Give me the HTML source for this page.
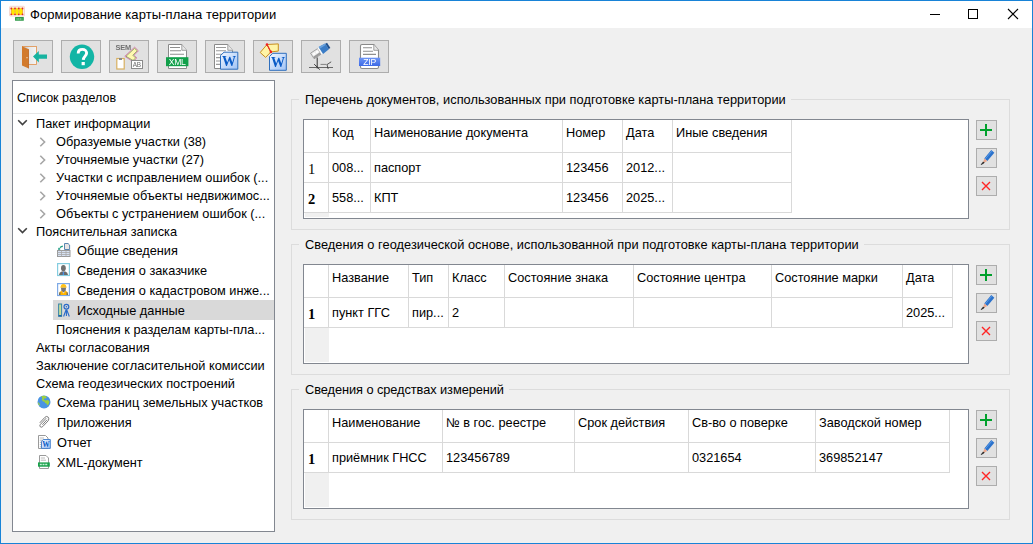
<!DOCTYPE html>
<html><head><meta charset="utf-8">
<style>
*{margin:0;padding:0;box-sizing:border-box}
html,body{width:1033px;height:544px;overflow:hidden;background:#f0f0f0}
body{position:relative;font-family:"Liberation Sans",sans-serif;font-size:12.5px;color:#000}
.a{position:absolute}
.t{position:absolute;white-space:nowrap;line-height:1}
#win{position:absolute;left:0;top:0;width:1033px;height:544px;border:1px solid #1883d7;background:#f0f0f0}
#title{position:absolute;left:1px;top:1px;width:1031px;height:27px;background:#fff}
.tb{position:absolute;top:40px;width:40px;height:33px;border:1px solid #adadad;background:#e1e1e1}
.sb{position:absolute;left:976px;width:21px;height:20px;border:1px solid #adadad;background:#e1e1e1}
.gb{position:absolute;left:291px;width:719px;height:131px;border:1px solid #dcdcdc}
.gcap{position:absolute;background:#f0f0f0;padding:0 5px 0 6px;white-space:nowrap;line-height:1}
.tbl{position:absolute;left:303px;width:666px;height:100px;border:1px solid #828790;background:#fff}
.hl{position:absolute;height:1px;background:#d9d9d9}
.vl{position:absolute;width:1px;background:#d9d9d9}
</style></head><body>
<div id="win"></div>
<div id="title"></div>

<!-- title icon -->
<svg class="a" style="left:8px;top:4px" width="18" height="18" viewBox="8 4 18 18">
  <rect x="9.5" y="6.3" width="15" height="9.8" rx="1" fill="#fbece6" stroke="#f2d2c8" stroke-width="0.8"/>
  <ellipse cx="13.1" cy="11.4" rx="1.9" ry="3" fill="#ffe800"/>
  <ellipse cx="16.9" cy="11.4" rx="1.9" ry="3" fill="#ffe800"/>
  <ellipse cx="20.7" cy="11.4" rx="1.9" ry="3" fill="#ffe800"/>
  <rect x="11.5" y="8.3" width="11" height="6.2" fill="none" stroke="#ffd000" stroke-width="0.8"/>
  <path d="M11.3 8.5V14.3M15 8.5V14.3M18.8 8.5V14.3M22.5 8.5V14.3" stroke="#e8a040" stroke-width="0.6"/>
  <g fill="#e02828"><circle cx="11.3" cy="8.5" r="0.9"/><circle cx="15" cy="8.5" r="0.9"/><circle cx="18.8" cy="8.5" r="0.9"/><circle cx="22.5" cy="8.5" r="0.9"/>
  <circle cx="11.3" cy="14.3" r="0.9"/><circle cx="15" cy="14.3" r="0.9"/><circle cx="18.8" cy="14.3" r="0.9"/><circle cx="22.5" cy="14.3" r="0.9"/></g>
  <rect x="15" y="17" width="8.8" height="3.8" rx="0.5" fill="#2f9a4a"/>
  <path d="M16.5 19H22.3" stroke="#bfe6c8" stroke-width="1" stroke-dasharray="1.2 0.5"/>
</svg>
<div class="t" style="left:30px;top:8px;font-size:13px;letter-spacing:0.08px">Формирование карты-плана территории</div>

<!-- window controls -->
<div class="a" style="left:930px;top:14px;width:10px;height:1px;background:#000"></div>
<div class="a" style="left:968px;top:9px;width:10px;height:10px;border:1px solid #000"></div>
<svg class="a" style="left:1007px;top:8px" width="12" height="12" viewBox="0 0 12 12"><path d="M1 1L11 11M11 1L1 11" stroke="#000" stroke-width="1.1"/></svg>

<!-- toolbar -->
<div class="tb" style="left:13px"></div>
<div class="tb" style="left:61px"></div>
<div class="tb" style="left:109px"></div>
<div class="tb" style="left:157px"></div>
<div class="tb" style="left:205px"></div>
<div class="tb" style="left:253px"></div>
<div class="tb" style="left:301px"></div>
<div class="tb" style="left:349px"></div>

<!-- toolbar icons -->
<svg class="a" style="left:0;top:0;will-change:transform" width="400" height="80" viewBox="0 0 400 80">
 <defs>
  <linearGradient id="dg" x1="0" x2="1"><stop offset="0" stop-color="#b8b8b8"/><stop offset="0.5" stop-color="#e8e8e8"/><stop offset="1" stop-color="#f4f4f4"/></linearGradient>
  <linearGradient id="wg" x1="0" y1="0" x2="1" y2="1"><stop offset="0" stop-color="#f2f7ff"/><stop offset="1" stop-color="#9fc2f5"/></linearGradient>
  <linearGradient id="zg" x1="0" y1="0" x2="0" y2="1"><stop offset="0" stop-color="#6d95f5"/><stop offset="1" stop-color="#3d6ae6"/></linearGradient>
  <linearGradient id="ug" x1="0" y1="0" x2="1" y2="0"><stop offset="0" stop-color="#3f7fc8"/><stop offset="1" stop-color="#2a66b0"/></linearGradient>
 </defs>
 <!-- exit door -->
 <rect x="22.5" y="46.5" width="14" height="18" fill="url(#dg)" stroke="#e0904a" stroke-width="0.8"/>
 <path d="M22 46.3 L28.8 49.3 L28.8 68.5 L22 65.5 Z" fill="#d27a2c"/><path d="M28.2 49.2 L28.8 49.5 L28.8 68.5 L28.2 68.2 Z" fill="#b86020"/>
 <rect x="26.5" y="57" width="1" height="1.3" fill="#f4e0c8"/>
 <path d="M33 56.6 L38.8 51 L38.8 54.4 L47 54.4 L47 58.8 L38.8 58.8 L38.8 62.6 Z" fill="#17b3a0"/>
 <!-- help -->
 <circle cx="82" cy="56.8" r="12.2" fill="#12b5a5"/>
 <path d="M78.2 53.4 C78.2 50.6 80 49.4 82.4 49.4 C84.9 49.4 86.6 51 86.6 53.1 C86.6 55.9 83.5 56.4 83.3 59.8" fill="none" stroke="#fff" stroke-width="2.9"/>
 <rect x="81.6" y="62" width="3.2" height="3.2" fill="#fff"/>
 <!-- SEM -->
 <text x="115.6" y="49.8" font-family="Liberation Sans" font-weight="bold" font-size="7.4" fill="#707070" letter-spacing="-0.2">SEM</text>
 <path d="M134.6 47.2 L138.4 50.8 L134 55.2 L136.8 58 L133 61.6 L124.8 56.3 Z" fill="#fff8b0" stroke="#d070b0" stroke-width="0.9"/>
 <path d="M134.6 48.4 L137.2 50.8 L132.8 55.2 L135.6 58 L133 60.4 L126 56.3 Z" fill="none" stroke="#3a6a3a" stroke-width="0.5"/>
 <rect x="116.8" y="58.5" width="7.4" height="10.5" fill="#fff" stroke="#d8b060" stroke-width="1.2"/>
 <rect x="119" y="58" width="3" height="2" fill="#8a8a8a"/>
 <rect x="131.5" y="60.5" width="11" height="8" fill="#fff" stroke="#8a8a8a" stroke-width="1"/>
 <text x="132.8" y="67.2" font-family="Liberation Sans" font-size="6.4" fill="#6a6a6a" letter-spacing="-0.3">AB</text>
 <!-- XML -->
 <path d="M168.5 44.5 L181.8 44.5 L186.5 50.3 L186.5 68.5 L168.5 68.5 Z" fill="#fff" stroke="#8a8a8a" stroke-width="1"/>
 <path d="M181.8 44.5 L181.8 50.3 L186.5 50.3" fill="#e8e8e8" stroke="#8a8a8a" stroke-width="0.8"/>
 <g stroke="#8f8f8f" stroke-width="1.1"><path d="M170 47.5H180M170 50.8H181M170 54.2H184"/></g>
 <rect x="166" y="57.2" width="22.4" height="9" fill="#11a04a"/>
 <text x="177.2" y="65.2" text-anchor="middle" font-family="Liberation Sans" font-size="8.6" fill="#fff" letter-spacing="-0.3">XML</text>
 <!-- Word doc -->
 <path d="M214.5 44.5 L227.8 44.5 L232.5 50.3 L232.5 68.5 L214.5 68.5 Z" fill="#fff" stroke="#8a8a8a" stroke-width="1"/>
 <path d="M227.8 44.5 L227.8 50.3 L232.5 50.3" fill="#e8e8e8" stroke="#8a8a8a" stroke-width="0.8"/>
 <g stroke="#9a9a9a" stroke-width="1.1"><path d="M216 47.5H226M216 50.8H226M216 54.2H224M216 57.6H222M216 61H222M216 64.4H222"/></g>
 <path d="M220.5 55.5 L224 52.2 L237.8 52.2 L237.8 69.2 L220.5 69.2 Z" fill="url(#wg)" stroke="#2f6fbd" stroke-width="1"/>
 <text x="229" y="66.2" text-anchor="middle" font-family="Liberation Serif" font-weight="bold" font-size="14" fill="#0b5cc7" transform-origin="0 0">W</text>
 <!-- polygon + Word -->
 <path d="M260.2 52.5 L267 44.5 L270.9 51.9 L265.6 57.4 Z" fill="#fff4a6" stroke="#c98f1c" stroke-width="1"/>
 <path d="M267 44.5 L278.3 43.9 L278.3 51.1 L270.9 51.9 Z" fill="#fff4a6" stroke="#c98f1c" stroke-width="1"/>
 <path d="M267 44.5 L270.9 51.9" stroke="#ee2020" stroke-width="1.1"/>
 <circle cx="267" cy="44.6" r="1.3" fill="#ee2020"/><circle cx="270.9" cy="51.9" r="1.3" fill="#ee2020"/>
 <path d="M269.5 56.5 L272.8 53.3 L286.3 53.3 L286.3 70.3 L269.5 70.3 Z" fill="url(#wg)" stroke="#2f6fbd" stroke-width="1"/>
 <text x="278" y="67.3" text-anchor="middle" font-family="Liberation Serif" font-weight="bold" font-size="14" fill="#0b5cc7" transform-origin="0 0">W</text>
 <!-- USB / geodesy -->
 <g transform="rotate(-33 321 50)">
  <rect x="310.5" y="47" width="8.5" height="6.6" fill="#ececec" stroke="#7a7a7a" stroke-width="0.6"/>
  <rect x="310.8" y="51.4" width="8" height="2" fill="#9a9a9a"/>
  <rect x="312" y="48.6" width="2.4" height="1.8" fill="#fff"/><rect x="315.4" y="48.6" width="2.4" height="1.8" fill="#fff"/>
  <rect x="319" y="46.6" width="1.6" height="7.4" fill="#fafafa"/>
  <path d="M320.6 46.2 L328 46.8 L328 53.8 L320.6 54.4 Z" fill="#3a7cc6"/>
  <path d="M320.6 46.2 L328 46.8 L328 48.4 L320.6 48.2 Z" fill="#6aa2dc"/>
  <rect x="328" y="47.2" width="2" height="6.2" fill="#1f4f8c"/>
 </g>
 <path d="M317.2 57.5 V68.5" stroke="#333" stroke-width="1"/>
 <path d="M309 67.5 H333" stroke="#5a5a5a" stroke-width="0.9"/>
 <path d="M314.2 64.2 L319.8 69.6" stroke="#2a2a2a" stroke-width="0.9"/>
 <path d="M320.5 64.4 H326.5" stroke="#777" stroke-width="0.9"/>
 <path d="M327 64.6 L331.2 61.8 M327 64.6 L328.2 69" stroke="#333" stroke-width="0.8"/>
 <!-- ZIP -->
 <path d="M362 44.5 L373.8 44.5 L378.5 50.3 L378.5 67 Q378.5 68.5 377 68.5 L362 68.5 Q360.5 68.5 360.5 67 L360.5 46 Q360.5 44.5 362 44.5 Z" fill="#fff" stroke="#8a8a8a" stroke-width="1.1"/>
 <path d="M373.8 44.5 L373.8 50.3 L378.5 50.3" fill="#e8e8e8" stroke="#8a8a8a" stroke-width="0.8"/>
 <g stroke="#8f8f8f" stroke-width="1.1"><path d="M363 47.8H372M363 51.3H373M363 54.4H376"/></g>
 <rect x="359" y="57.7" width="21.2" height="8.3" fill="url(#zg)"/>
 <text x="369.6" y="65.1" text-anchor="middle" font-family="Liberation Sans" font-size="8.6" fill="#fff" letter-spacing="-0.2">ZIP</text>
</svg>

<!-- left panel -->
<div class="a" style="left:12px;top:80px;width:263px;height:452px;border:1px solid #828790;background:#fff"></div>
<div class="a" style="left:13px;top:113px;width:261px;height:1px;background:#e5e5e5"></div>
<div class="t" style="left:17px;top:92px">Список разделов</div>

<div class="a" style="left:53px;top:300px;width:221px;height:20px;background:#d9d9d9"></div>
<!-- tree icons -->
<svg class="a" style="left:30px;top:236px" width="50" height="240" viewBox="30 236 50 240">
 <defs><linearGradient id="wg2" x1="0" y1="0" x2="1" y2="1"><stop offset="0" stop-color="#f2f7ff"/><stop offset="1" stop-color="#9fc2f5"/></linearGradient></defs>
 <!-- общие сведения -->
 <rect x="57.5" y="250.5" width="12.5" height="6" fill="#d6e2f4" stroke="#9a9a9a" stroke-width="1"/>
 <path d="M57.5 252.5H70M57.5 254.5H70M61.5 250.5V256.5M66 250.5V256.5" stroke="#a8a8a8" stroke-width="0.8"/>
 <path d="M64.5 243.5 H68 L69.6 245 V249.5 H64.5 Z" fill="#e8e4e4" stroke="#5a86b0" stroke-width="1"/>
 <path d="M62.8 245.6 Q60 245.8 59.2 248.4 L58.2 247.6 L58.3 250 L60.6 249.6 L59.8 249 Q60.5 247.2 62.8 247 Z" fill="#1a9a80"/>
 <!-- заказчик -->
 <rect x="57.6" y="263.6" width="11.8" height="11.9" fill="#fff" stroke="#84cde0" stroke-width="1.2"/>
 <ellipse cx="63.4" cy="268.2" rx="2.4" ry="3.1" fill="#707070"/>
 <path d="M59 275 Q59.2 272.3 61.6 271.6 L65.4 271.6 Q67.8 272.3 68 275 Z" fill="#6a6a6a"/>
 <path d="M62.8 271.8 H64 L64.1 275 H62.7 Z" fill="#4a90e8"/>
 <!-- инженер -->
 <rect x="57.6" y="283.6" width="11.8" height="11.9" fill="#fff" stroke="#7eaae6" stroke-width="1.2"/>
 <path d="M60.4 287.8 Q60.6 284 63.5 283.9 Q66.4 284 66.6 287.8 Z" fill="#ffc21a"/>
 <path d="M61 287.8 H66 L65.6 291 L63.5 292.5 L61.4 291 Z" fill="#777"/>
 <path d="M59 295 L59.5 292 L61.5 290.8 L63.5 293.6 L65.5 290.8 L67.5 292 L68 295 Z" fill="#ffb400"/>
 <path d="M59 295 L59.4 292.5 L60.4 292 L60.4 295 Z M68 295 L67.6 292.5 L66.6 292 L66.6 295 Z" fill="#666"/>
 <!-- исходные данные -->
 <rect x="58.6" y="304" width="3" height="12.4" fill="#c8dc98" stroke="#3a86a8" stroke-width="1"/>
 <path d="M58.6 315.6 H61.6" stroke="#1f5fb0" stroke-width="1.2"/>
 <circle cx="66.4" cy="306.8" r="2.4" fill="none" stroke="#2a6ac8" stroke-width="1.2"/>
 <circle cx="66.4" cy="306.8" r="0.8" fill="#2a6ac8"/>
 <path d="M66.4 309.5 V316 M66 310 L63.6 316.5 M66.8 310 L69.3 316.5" stroke="#2a6ac8" stroke-width="1.1"/>
 <!-- globe -->
 <circle cx="44" cy="401.9" r="6.5" fill="#4a94e4"/>
 <path d="M41.2 396.3 Q43 395.6 45.5 396 L46.8 397.4 L45.8 398.6 L44.5 398.2 L43.6 399.6 L45.6 400.5 L48 400 L49.5 401.5 L48.8 404 L47.2 405.5 L46.5 403.5 L45 403 L44.5 401.6 L43 401.4 L41.8 399.8 L42.3 398.2 Z" fill="#9ed040"/>
 <path d="M37.8 402.5 Q38.3 404.8 39.6 405.8 L40 404.6 L38.7 402.6 Z" fill="#9ed040"/>
 <!-- paperclip -->
 <path d="M46.2 418.2 L40.4 424.4 Q39.2 425.9 40.4 426.9 Q41.6 427.7 42.8 426.5 L48.2 420.8 Q49.6 418.8 48.1 417 Q46.4 415.7 44.8 417.4 L39.8 422.8" fill="none" stroke="#6e6e6e" stroke-width="0.9"/>
 <path d="M42.4 424.8 L47 419.8" fill="none" stroke="#6e6e6e" stroke-width="0.9"/>
 <!-- word doc -->
 <path d="M38.5 435.5 H45.5 L48 438 V448.5 H38.5 Z" fill="#fff" stroke="#9a9a9a" stroke-width="1"/>
 <path d="M39.8 438H44M39.8 440.2H45M39.8 442.4H41.5M39.8 444.6H41.5M39.8 446.8H41.5" stroke="#aaa" stroke-width="0.8"/>
 <path d="M41.5 441.3 L43.3 439.5 H50.3 V448.4 H41.5 Z" fill="url(#wg2)" stroke="#3a78c8" stroke-width="0.9"/>
 <text x="46" y="447.2" text-anchor="middle" font-family="Liberation Serif" font-weight="bold" font-size="7.5" fill="#0b5cc7">W</text>
 <!-- xml doc -->
 <path d="M39.5 455.5 H46 L48.5 458 V468.5 H39.5 Z" fill="#fff" stroke="#9a9a9a" stroke-width="1"/>
 <path d="M40.8 458H45M40.8 460.2H46" stroke="#aaa" stroke-width="0.8"/>
 <rect x="38" y="462.4" width="11.8" height="4.3" fill="#18a04a"/>
 <path d="M39.8 464.5H48" stroke="#c8f0d8" stroke-width="1.4" stroke-dasharray="2 0.7"/>
</svg>

<!-- group boxes -->
<div class="gb" style="top:99px"></div>
<div class="gb" style="top:244px"></div>
<div class="gb" style="top:389px"></div>

<div class="tbl" style="top:119px"></div>
<div class="tbl" style="top:264px"></div>
<div class="tbl" style="top:409px"></div>

<div class="sb" style="top:120px"></div>
<div class="sb" style="top:148px"></div>
<div class="sb" style="top:176px"></div>
<div class="sb" style="top:265px"></div>
<div class="sb" style="top:293px"></div>
<div class="sb" style="top:321px"></div>
<div class="sb" style="top:410px"></div>
<div class="sb" style="top:438px"></div>
<div class="sb" style="top:466px"></div>

<!-- tree -->
<div class="t" style="left:36px;top:118px;font-size:12.75px">Пакет информации</div>
<svg class="a" style="left:17px;top:119px" width="11" height="7" viewBox="0 0 11 7"><path d="M1.2 1.2L5.5 5.5L9.8 1.2" fill="none" stroke="#404040" stroke-width="1.6"/></svg>
<div class="t" style="left:56px;top:136px;font-size:12.75px">Образуемые участки (38)</div>
<svg class="a" style="left:39px;top:137px" width="8" height="11" viewBox="0 0 8 11"><path d="M1.3 0.8L5.6 5L1.3 9.2" fill="none" stroke="#a6a6a6" stroke-width="1.6"/></svg>
<div class="t" style="left:56px;top:154px;font-size:12.75px">Уточняемые участки (27)</div>
<svg class="a" style="left:39px;top:155px" width="8" height="11" viewBox="0 0 8 11"><path d="M1.3 0.8L5.6 5L1.3 9.2" fill="none" stroke="#a6a6a6" stroke-width="1.6"/></svg>
<div class="t" style="left:56px;top:172px;font-size:12.75px">Участки с исправлением ошибок (...</div>
<svg class="a" style="left:39px;top:173px" width="8" height="11" viewBox="0 0 8 11"><path d="M1.3 0.8L5.6 5L1.3 9.2" fill="none" stroke="#a6a6a6" stroke-width="1.6"/></svg>
<div class="t" style="left:56px;top:190px;font-size:12.75px">Уточняемые объекты недвижимос...</div>
<svg class="a" style="left:39px;top:191px" width="8" height="11" viewBox="0 0 8 11"><path d="M1.3 0.8L5.6 5L1.3 9.2" fill="none" stroke="#a6a6a6" stroke-width="1.6"/></svg>
<div class="t" style="left:56px;top:208px;font-size:12.75px">Объекты с устранением ошибок (...</div>
<svg class="a" style="left:39px;top:209px" width="8" height="11" viewBox="0 0 8 11"><path d="M1.3 0.8L5.6 5L1.3 9.2" fill="none" stroke="#a6a6a6" stroke-width="1.6"/></svg>
<div class="t" style="left:36px;top:226px;font-size:12.75px">Пояснительная записка</div>
<svg class="a" style="left:17px;top:227px" width="11" height="7" viewBox="0 0 11 7"><path d="M1.2 1.2L5.5 5.5L9.8 1.2" fill="none" stroke="#404040" stroke-width="1.6"/></svg>
<div class="t" style="left:77px;top:245px;font-size:12.75px">Общие сведения</div>
<div class="t" style="left:77px;top:265px;font-size:12.75px">Сведения о заказчике</div>
<div class="t" style="left:77px;top:285px;font-size:12.75px">Сведения о кадастровом инже...</div>
<div class="t" style="left:77px;top:305px;font-size:12.75px">Исходные данные</div>
<div class="t" style="left:56px;top:324px;font-size:12.75px">Пояснения к разделам карты-пла...</div>
<div class="t" style="left:36px;top:342px;font-size:12.75px">Акты согласования</div>
<div class="t" style="left:36px;top:360px;font-size:12.75px">Заключение согласительной комиссии</div>
<div class="t" style="left:36px;top:378px;font-size:12.75px">Схема геодезических построений</div>
<div class="t" style="left:57px;top:397px;font-size:12.75px">Схема границ земельных участков</div>
<div class="t" style="left:57px;top:417px;font-size:12.75px">Приложения</div>
<div class="t" style="left:57px;top:437px;font-size:12.75px">Отчет</div>
<div class="t" style="left:57px;top:457px;font-size:12.75px">XML-документ</div>
<svg class="a" style="left:976px;top:120px" width="21" height="20" viewBox="0 0 21 20"><rect x="4" y="9" width="12" height="2" fill="#00a02c"/><rect x="9" y="4" width="2" height="12" fill="#00a02c"/></svg>
<svg class="a" style="left:976px;top:148px" width="21" height="20" viewBox="0 0 21 20"><path d="M9.8 11.8 L16.8 3.4" stroke="#2b72cc" stroke-width="4"/><path d="M9.2 11 L15.8 3.2" stroke="#5a9ae6" stroke-width="1"/><path d="M8.3 10.5 L11.3 13.1 L6.9 15.2 Z" fill="#eba58a"/><path d="M7.3 13.9 L5.2 16.6 L8.2 14.8 Z" fill="#1a1a1a" stroke="#1a1a1a" stroke-width="0.7"/></svg>
<svg class="a" style="left:976px;top:176px" width="21" height="20" viewBox="0 0 21 20"><path d="M6 6L14 14M14 6L6 14" stroke="#ff2424" stroke-width="1.35"/></svg>
<svg class="a" style="left:976px;top:265px" width="21" height="20" viewBox="0 0 21 20"><rect x="4" y="9" width="12" height="2" fill="#00a02c"/><rect x="9" y="4" width="2" height="12" fill="#00a02c"/></svg>
<svg class="a" style="left:976px;top:293px" width="21" height="20" viewBox="0 0 21 20"><path d="M9.8 11.8 L16.8 3.4" stroke="#2b72cc" stroke-width="4"/><path d="M9.2 11 L15.8 3.2" stroke="#5a9ae6" stroke-width="1"/><path d="M8.3 10.5 L11.3 13.1 L6.9 15.2 Z" fill="#eba58a"/><path d="M7.3 13.9 L5.2 16.6 L8.2 14.8 Z" fill="#1a1a1a" stroke="#1a1a1a" stroke-width="0.7"/></svg>
<svg class="a" style="left:976px;top:321px" width="21" height="20" viewBox="0 0 21 20"><path d="M6 6L14 14M14 6L6 14" stroke="#ff2424" stroke-width="1.35"/></svg>
<svg class="a" style="left:976px;top:410px" width="21" height="20" viewBox="0 0 21 20"><rect x="4" y="9" width="12" height="2" fill="#00a02c"/><rect x="9" y="4" width="2" height="12" fill="#00a02c"/></svg>
<svg class="a" style="left:976px;top:438px" width="21" height="20" viewBox="0 0 21 20"><path d="M9.8 11.8 L16.8 3.4" stroke="#2b72cc" stroke-width="4"/><path d="M9.2 11 L15.8 3.2" stroke="#5a9ae6" stroke-width="1"/><path d="M8.3 10.5 L11.3 13.1 L6.9 15.2 Z" fill="#eba58a"/><path d="M7.3 13.9 L5.2 16.6 L8.2 14.8 Z" fill="#1a1a1a" stroke="#1a1a1a" stroke-width="0.7"/></svg>
<svg class="a" style="left:976px;top:466px" width="21" height="20" viewBox="0 0 21 20"><path d="M6 6L14 14M14 6L6 14" stroke="#ff2424" stroke-width="1.35"/></svg>
<!-- tables -->
<div class="hl" style="left:304px;top:152px;width:488px"></div>
<div class="hl" style="left:304px;top:182px;width:488px"></div>
<div class="hl" style="left:304px;top:212px;width:488px"></div>
<div class="vl" style="left:328px;top:120px;height:93px"></div>
<div class="vl" style="left:370px;top:120px;height:93px"></div>
<div class="vl" style="left:562px;top:120px;height:93px"></div>
<div class="vl" style="left:622px;top:120px;height:93px"></div>
<div class="vl" style="left:672px;top:120px;height:93px"></div>
<div class="vl" style="left:791px;top:120px;height:93px"></div>
<div class="a" style="left:305px;top:213px;width:24px;height:4px;background:#f0f0f0"></div>
<div class="t" style="left:332px;top:127px;font-size:12.75px">Код</div>
<div class="t" style="left:374px;top:127px;font-size:12.75px">Наименование документа</div>
<div class="t" style="left:566px;top:127px;font-size:12.75px">Номер</div>
<div class="t" style="left:626px;top:127px;font-size:12.75px">Дата</div>
<div class="t" style="left:676px;top:127px;font-size:12.75px">Иные сведения</div>
<div class="t" style="left:308px;top:161px;font-family:'Liberation Serif',serif;font-size:14.5px;margin-top:1px;font-weight:normal">1</div>
<div class="t" style="left:332px;top:162px;font-size:12.75px">008...</div>
<div class="t" style="left:374px;top:162px;font-size:12.75px">паспорт</div>
<div class="t" style="left:566px;top:162px;font-size:12.75px">123456</div>
<div class="t" style="left:626px;top:162px;font-size:12.75px">2012...</div>
<div class="t" style="left:308px;top:191px;font-family:'Liberation Serif',serif;font-size:14.5px;margin-top:1px;font-weight:bold">2</div>
<div class="t" style="left:332px;top:192px;font-size:12.75px">558...</div>
<div class="t" style="left:374px;top:192px;font-size:12.75px">КПТ</div>
<div class="t" style="left:566px;top:192px;font-size:12.75px">123456</div>
<div class="t" style="left:626px;top:192px;font-size:12.75px">2025...</div>
<div class="hl" style="left:304px;top:297px;width:649px"></div>
<div class="hl" style="left:304px;top:327px;width:649px"></div>
<div class="vl" style="left:328px;top:265px;height:63px"></div>
<div class="vl" style="left:408px;top:265px;height:63px"></div>
<div class="vl" style="left:448px;top:265px;height:63px"></div>
<div class="vl" style="left:504px;top:265px;height:63px"></div>
<div class="vl" style="left:633px;top:265px;height:63px"></div>
<div class="vl" style="left:771px;top:265px;height:63px"></div>
<div class="vl" style="left:902px;top:265px;height:63px"></div>
<div class="vl" style="left:952px;top:265px;height:63px"></div>
<div class="a" style="left:305px;top:328px;width:24px;height:34px;background:#f0f0f0"></div>
<div class="t" style="left:332px;top:272px;font-size:12.75px">Название</div>
<div class="t" style="left:412px;top:272px;font-size:12.75px">Тип</div>
<div class="t" style="left:452px;top:272px;font-size:12.75px">Класс</div>
<div class="t" style="left:508px;top:272px;font-size:12.75px">Состояние знака</div>
<div class="t" style="left:637px;top:272px;font-size:12.75px">Состояние центра</div>
<div class="t" style="left:775px;top:272px;font-size:12.75px">Состояние марки</div>
<div class="t" style="left:906px;top:272px;font-size:12.75px">Дата</div>
<div class="t" style="left:308px;top:306px;font-family:'Liberation Serif',serif;font-size:14.5px;margin-top:1px;font-weight:bold">1</div>
<div class="t" style="left:332px;top:307px;font-size:12.75px">пункт ГГС</div>
<div class="t" style="left:412px;top:307px;font-size:12.75px">пир...</div>
<div class="t" style="left:452px;top:307px;font-size:12.75px">2</div>
<div class="t" style="left:906px;top:307px;font-size:12.75px">2025...</div>
<div class="hl" style="left:304px;top:442px;width:646px"></div>
<div class="hl" style="left:304px;top:472px;width:646px"></div>
<div class="vl" style="left:328px;top:410px;height:63px"></div>
<div class="vl" style="left:442px;top:410px;height:63px"></div>
<div class="vl" style="left:574px;top:410px;height:63px"></div>
<div class="vl" style="left:688px;top:410px;height:63px"></div>
<div class="vl" style="left:815px;top:410px;height:63px"></div>
<div class="vl" style="left:949px;top:410px;height:63px"></div>
<div class="a" style="left:305px;top:473px;width:24px;height:34px;background:#f0f0f0"></div>
<div class="t" style="left:332px;top:417px;font-size:12.75px">Наименование</div>
<div class="t" style="left:446px;top:417px;font-size:12.75px">№ в гос. реестре</div>
<div class="t" style="left:578px;top:417px;font-size:12.75px">Срок действия</div>
<div class="t" style="left:692px;top:417px;font-size:12.75px">Св-во о поверке</div>
<div class="t" style="left:819px;top:417px;font-size:12.75px">Заводской номер</div>
<div class="t" style="left:308px;top:451px;font-family:'Liberation Serif',serif;font-size:14.5px;margin-top:1px;font-weight:bold">1</div>
<div class="t" style="left:332px;top:452px;font-size:12.75px">приёмник ГНСС</div>
<div class="t" style="left:446px;top:452px;font-size:12.75px">123456789</div>
<div class="t" style="left:692px;top:452px;font-size:12.75px">0321654</div>
<div class="t" style="left:819px;top:452px;font-size:12.75px">369852147</div>
<div class="gcap" style="left:299px;top:95px;font-size:12.8px;letter-spacing:0.025px;height:10px;line-height:10px">Перечень документов, использованных при подготовке карты-плана территории</div>
<div class="gcap" style="left:299px;top:240px;font-size:12.8px;letter-spacing:0.035px;height:10px;line-height:10px">Сведения о геодезической основе, использованной при подготовке карты-плана территории</div>
<div class="gcap" style="left:299px;top:385px;font-size:12.8px;letter-spacing:-0.07px;height:10px;line-height:10px">Сведения о средствах измерений</div>
</body></html>
